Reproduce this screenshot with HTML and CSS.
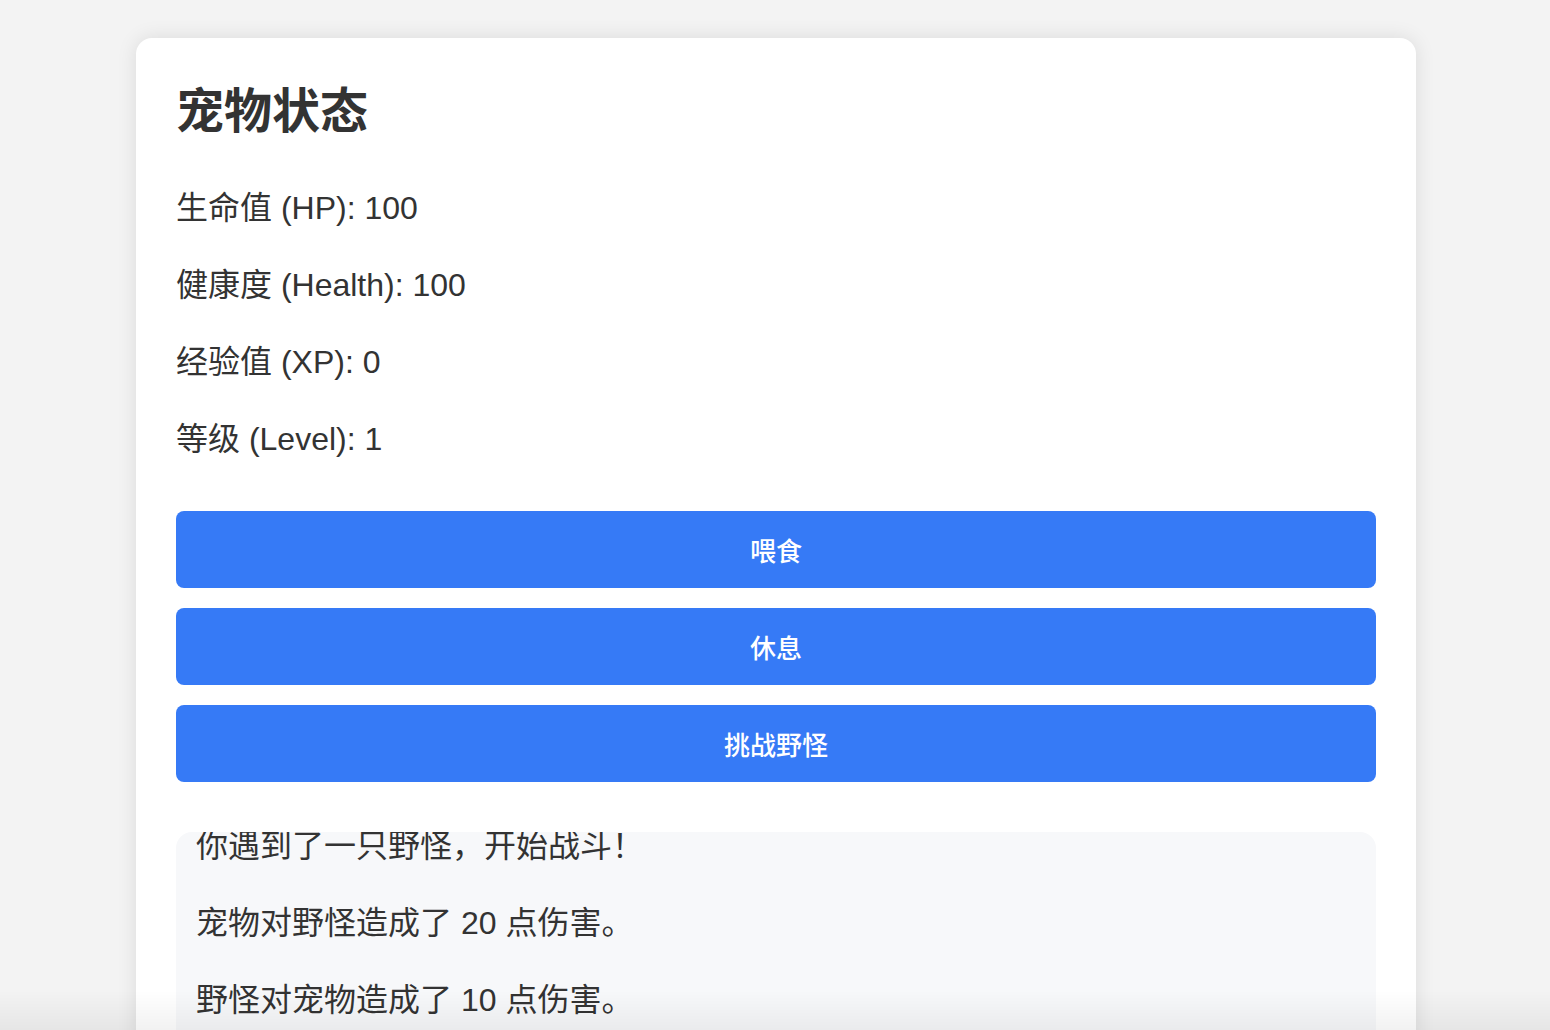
FILE: index.html
```html
<!DOCTYPE html>
<html lang="zh-CN">
<head>
<meta charset="utf-8">
<title>宠物状态</title>
<link rel="stylesheet" href="styles.css">
</head>
<body>
<main class="card">
  <h2 class="title">宠物状态</h2>
  <div class="stats">
    <p class="stat">生命值 (HP): 100</p>
    <p class="stat">健康度 (Health): 100</p>
    <p class="stat">经验值 (XP): 0</p>
    <p class="stat">等级 (Level): 1</p>
  </div>
  <div class="actions">
    <button class="btn">喂食</button>
    <button class="btn">休息</button>
    <button class="btn">挑战野怪</button>
  </div>
  <div class="log">
    <div class="log-inner">
      <p class="log-line">你遇到了一只野怪，开始战斗！</p>
      <p class="log-line">宠物对野怪造成了 20 点伤害。</p>
      <p class="log-line">野怪对宠物造成了 10 点伤害。</p>
      <p class="log-line">宠物对野怪造成了 20 点伤害。</p>
    </div>
  </div>
</main>
<div class="bottom-fade"></div>
</body>
</html>
```

FILE: styles.css
```css
html, body {
  margin: 0;
  padding: 0;
}
body {
  background: #f3f3f3;
  font-family: "Liberation Sans", "Noto Sans CJK SC", sans-serif;
  color: #333;
  padding-top: 38px;
  height: 992px;
  overflow: hidden;
}
.card {
  width: 1280px;
  box-sizing: border-box;
  margin: 0 auto;
  background: #fff;
  border-radius: 16px;
  box-shadow: 0 0 20px rgba(0, 0, 0, 0.1);
  padding: 40px 40px 60px;
  min-height: 1100px;
  transform: translateX(1px);
}
.title {
  margin: 0;
  font-size: 48px;
  line-height: 67px;
  font-weight: bold;
  color: #333;
}
.stats {
  display: flex;
  flex-direction: column;
  gap: 32px;
  margin-top: 41px;
}
.stat {
  margin: 0;
  font-size: 32px;
  line-height: 45px;
}
.actions {
  display: flex;
  flex-direction: column;
  gap: 20px;
  margin-top: 49px;
}
.btn {
  display: block;
  width: 100%;
  height: 77px;
  border: none;
  border-radius: 8px;
  background: #367af6;
  color: #fff;
  font-family: "Liberation Sans", "Noto Sans CJK SC", sans-serif;
  font-size: 26px;
  font-weight: 500;
  padding: 0;
}
.log {
  margin-top: 50px;
  background: #f7f8fa;
  border-radius: 16px;
  height: 400px;
  overflow: hidden;
  padding: 0 20px;
}
.log-inner {
  display: flex;
  flex-direction: column;
  gap: 32px;
  margin-top: -8px;
}
.log-line {
  margin: 0;
  font-size: 32px;
  line-height: 45px;
}
.bottom-fade {
  position: fixed;
  left: 0;
  right: 0;
  bottom: 0;
  height: 40px;
  background: linear-gradient(to bottom, rgba(0,0,0,0), rgba(0,0,0,0.05));
  pointer-events: none;
}
```
